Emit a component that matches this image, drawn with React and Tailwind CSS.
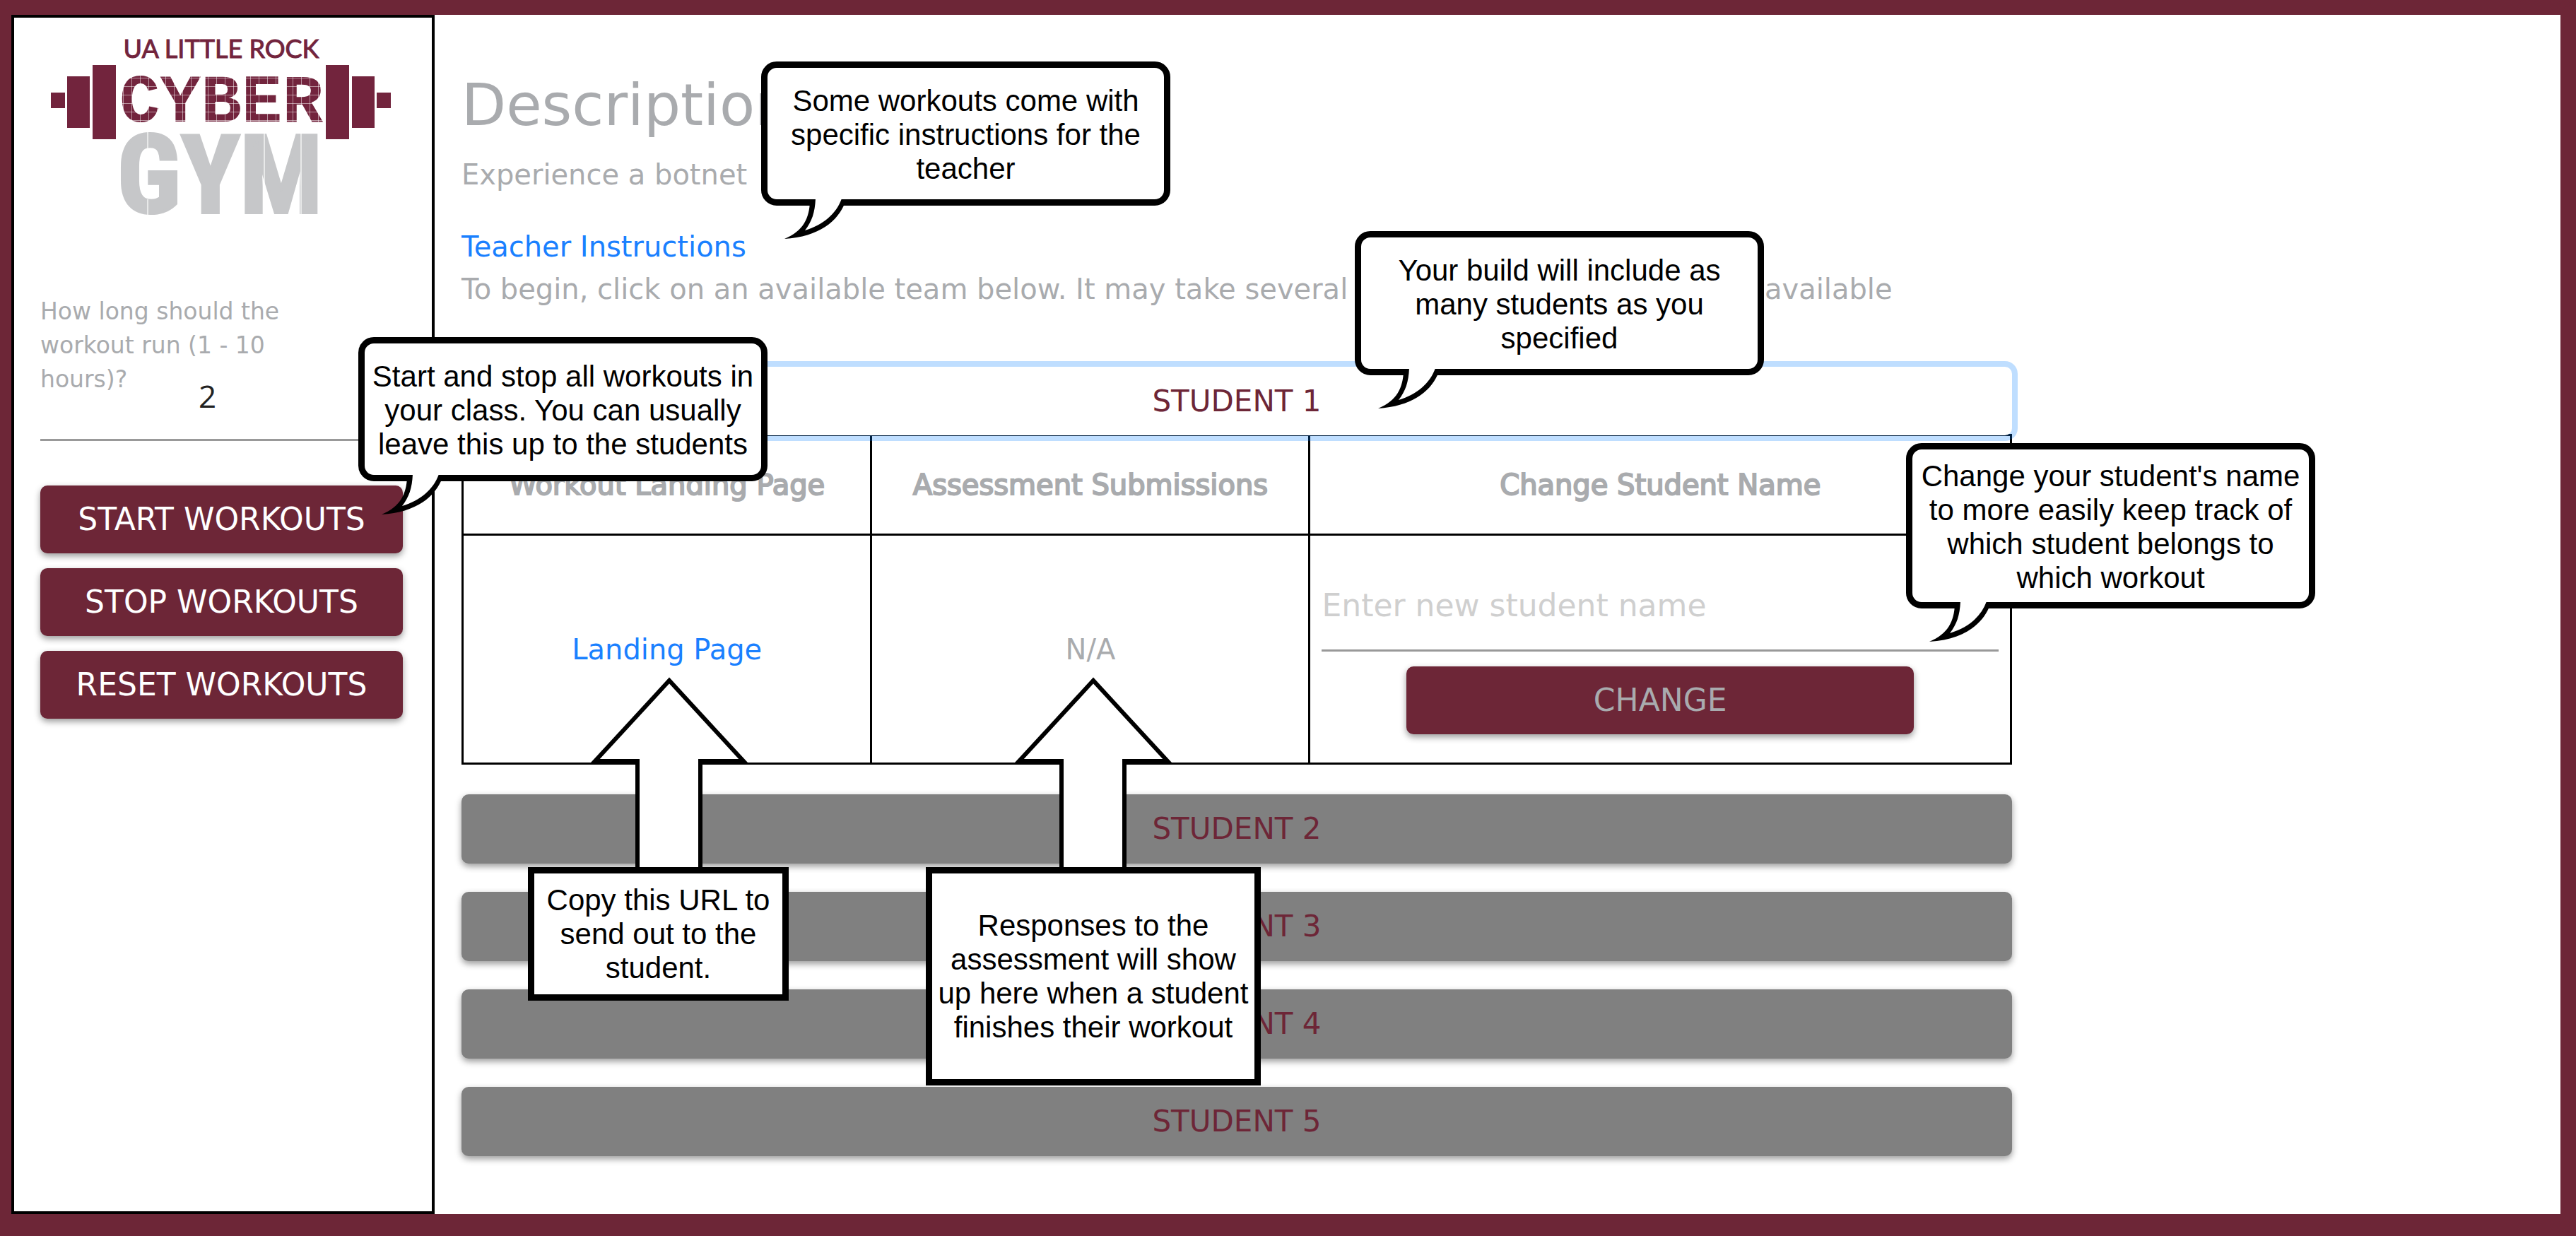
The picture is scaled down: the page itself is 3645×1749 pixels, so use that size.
import React from "react";

const studentButton =
  "flex h-[98px] w-full items-center justify-center rounded-[10px] bg-[#808080] text-[42px] text-[#6d2637] shadow-[0_4px_10px_rgba(0,0,0,0.4)]";
const actionButton =
  "flex h-24 w-full items-center justify-center rounded-[10px] bg-[#6d2637] text-[44px] text-white shadow-[0_4px_10px_rgba(0,0,0,0.4)]";
const headCell = "h-[141px] border-[3px] border-black font-normal [-webkit-text-stroke:2px_#a9abae]";
const bodyCell = "h-[324px] border-[3px] border-black px-4";

function Logo() {
  return (
    <svg viewBox="0 0 513 260" className="w-full overflow-visible" role="img" aria-label="UA Little Rock Cyber Gym">
      <defs>
        <pattern id="pixels" x="117" y="62" width="12" height="12" patternUnits="userSpaceOnUse">
          <path d="M0 .5H12M.5 0V12" stroke="#fff" strokeOpacity=".5" strokeWidth="1" />
        </pattern>
      </defs>
      <g fill="#72243d">
        <rect x="15" y="83" width="20" height="22" />
        <rect x="38" y="60" width="32" height="73" />
        <rect x="74" y="44" width="33" height="105" />
        <rect x="404" y="44" width="33" height="105" />
        <rect x="441" y="60" width="32" height="73" />
        <rect x="476" y="83" width="20" height="22" />
      </g>
      <text x="256" y="34" textAnchor="middle" fontFamily="Lato" fontSize="36" fill="#72243d" stroke="#72243d" strokeWidth="1">
        UA LITTLE ROCK
      </text>
      <text x="256" y="124" textAnchor="middle" fontFamily="'Liberation Mono'" fontWeight="700" fontSize="96" fill="#72243d">
        CYBER
      </text>
      <rect x="110" y="58" width="290" height="70" fill="url(#pixels)" />
      <text
        x="254"
        y="253"
        textAnchor="middle"
        fontFamily="'Liberation Sans Narrow', 'Roboto Condensed', 'Open Sans Condensed', 'DejaVu Sans Condensed'"
        fontWeight="700"
        fontSize="154"
        fill="#c6c7c9"
        stroke="#c6c7c9"
        strokeWidth="4"
      >
        GYM
      </text>
      <path d="M152 138V166M152 234V260M317 140V258M369 140V258" stroke="#fff" strokeWidth="2" strokeOpacity=".6" />
    </svg>
  );
}

function Bubble({ className, children }) {
  return (
    <div
      className={`absolute flex w-[579px] items-center justify-center rounded-[22px] border-[9px] border-black bg-white px-2 pt-1 text-center ${className}`}
    >
      <p>{children}</p>
      <svg viewBox="30 194 94 60" className="absolute top-full left-[21px] -mt-px h-[60px] w-[94px]" aria-hidden="true">
        <path d="M69 199C68 221 60 240 33 251C82 248 109 226 119 199Z" fill="#000" />
        <path d="M77 194C76 214 72 226 62 239C88 231 106 216 114 194Z" fill="#fff" />
      </svg>
    </div>
  );
}

function ArrowNote({ className, arrowClass, children }) {
  return (
    <div className={`absolute flex items-center justify-center border-[9px] border-black bg-white text-center ${className}`}>
      <svg viewBox="0 0 222 276" className={`absolute bottom-full mb-[9px] h-[276px] w-[222px] ${arrowClass}`} aria-hidden="true">
        <path d="M66 280V126H6L111 12L216 126H155V280" fill="#fff" stroke="#000" strokeWidth="6" />
      </svg>
      <p>{children}</p>
    </div>
  );
}

export default function App() {
  return (
    <div className="relative flex min-h-screen bg-[#6d2637] pt-[21px] pr-[22px] pb-[31px] pl-4 font-['DejaVu_Sans',sans-serif] text-[40px] leading-[60px] text-[#a9abae]">
      <aside className="w-[599px] shrink-0 border-4 border-black bg-white pt-[23px] pr-[41px] pl-[37px]">
        <Logo />
        <div className="mt-[109px] grid border-b-[3px] border-[#999] pb-[28px]">
          <label htmlFor="hours" className="col-start-1 row-start-1 w-[370px] text-[33px] leading-[48px]">
            How long should the workout run (1 - 10 hours)?
          </label>
          <input
            id="hours"
            defaultValue="2"
            inputMode="numeric"
            className="col-start-1 row-start-1 mt-[110px] h-[66px] w-full bg-transparent pl-[224px] font-['Open_Sans',sans-serif] text-[44px] text-[#222] outline-none"
          />
        </div>
        <div className="mt-[63px] flex flex-col gap-[21px]">
          <button type="button" className={actionButton}>START WORKOUTS</button>
          <button type="button" className={actionButton}>STOP WORKOUTS</button>
          <button type="button" className={actionButton}>RESET WORKOUTS</button>
        </div>
      </aside>

      <main className="min-w-0 flex-1 bg-white pt-20 pl-[38px]">
        <div className="max-w-[2194px]">
          <h1 className="text-[82px] leading-[96px]">Description</h1>
          <p className="mt-5">Experience a botnet</p>
          <p className="mt-[42px]">
            <a href="#instructions" className="text-[#1a80ff]">Teacher Instructions</a>
          </p>
          <p className="whitespace-nowrap">
            To begin, click on an available team below. It may take several minutes for your team to be available
          </p>

          <button
            type="button"
            className="relative mt-20 flex h-[97px] w-full items-center justify-center rounded-[10px] bg-white text-[42px] text-[#6d2637] shadow-[0_0_0_8px_rgba(0,123,255,0.25)]"
          >
            STUDENT 1
          </button>
          <table className="-mt-[2px] w-full table-fixed border-collapse text-center">
            <colgroup>
              <col className="w-[26.4%]" />
              <col className="w-[28.3%]" />
              <col />
            </colgroup>
            <thead>
              <tr>
                <th className={headCell}>Workout Landing Page</th>
                <th className={headCell}>Assessment Submissions</th>
                <th className={headCell}>Change Student Name</th>
              </tr>
            </thead>
            <tbody>
              <tr>
                <td className={bodyCell}>
                  <a href="#landing" className="text-[#1a80ff]">Landing Page</a>
                </td>
                <td className={bodyCell}>N/A</td>
                <td className={bodyCell}>
                  <input
                    aria-label="New student name"
                    placeholder="Enter new student name"
                    className="block h-[124px] w-full border-b-[3px] border-[#999] bg-transparent pb-1 text-[44px] outline-none placeholder:text-[#cfcfcf]"
                  />
                  <button
                    type="button"
                    className="mx-auto mt-[21px] block h-24 w-3/4 rounded-[10px] bg-[#6d2637] text-[44px] text-[#a9abae] shadow-[0_4px_10px_rgba(0,0,0,0.4)]"
                  >
                    CHANGE
                  </button>
                </td>
              </tr>
            </tbody>
          </table>
          <div className="mt-[42px] flex flex-col gap-10">
            <button type="button" className={studentButton}>STUDENT 2</button>
            <button type="button" className={studentButton}>STUDENT 3</button>
            <button type="button" className={studentButton}>STUDENT 4</button>
            <button type="button" className={studentButton}>STUDENT 5</button>
          </div>
        </div>
      </main>

      <div className="absolute top-0 left-0 font-['Liberation_Sans',sans-serif] text-[42px] leading-[48px] text-black">
        <Bubble className="top-[87px] left-[1077px] h-[204px]">
          Some workouts come with specific instructions for the teacher
        </Bubble>
        <Bubble className="top-[327px] left-[1917px] h-[204px]">
          Your build will include as many students as you specified
        </Bubble>
        <Bubble className="top-[477px] left-[507px] h-[204px]">
          Start and stop all workouts in your class. You can usually leave this up to the students
        </Bubble>
        <Bubble className="top-[627px] left-[2697px] h-[234px]">
          Change your student's name to more easily keep track of which student belongs to which workout
        </Bubble>
        <ArrowNote className="top-[1227px] left-[747px] h-[189px] w-[369px]" arrowClass="left-[80px]">
          Copy this URL to send out to the student.
        </ArrowNote>
        <ArrowNote className="top-[1227px] left-[1310px] h-[309px] w-[474px]" arrowClass="left-[117px]">
          Responses to the assessment will show up here when a student finishes their workout
        </ArrowNote>
      </div>
    </div>
  );
}
